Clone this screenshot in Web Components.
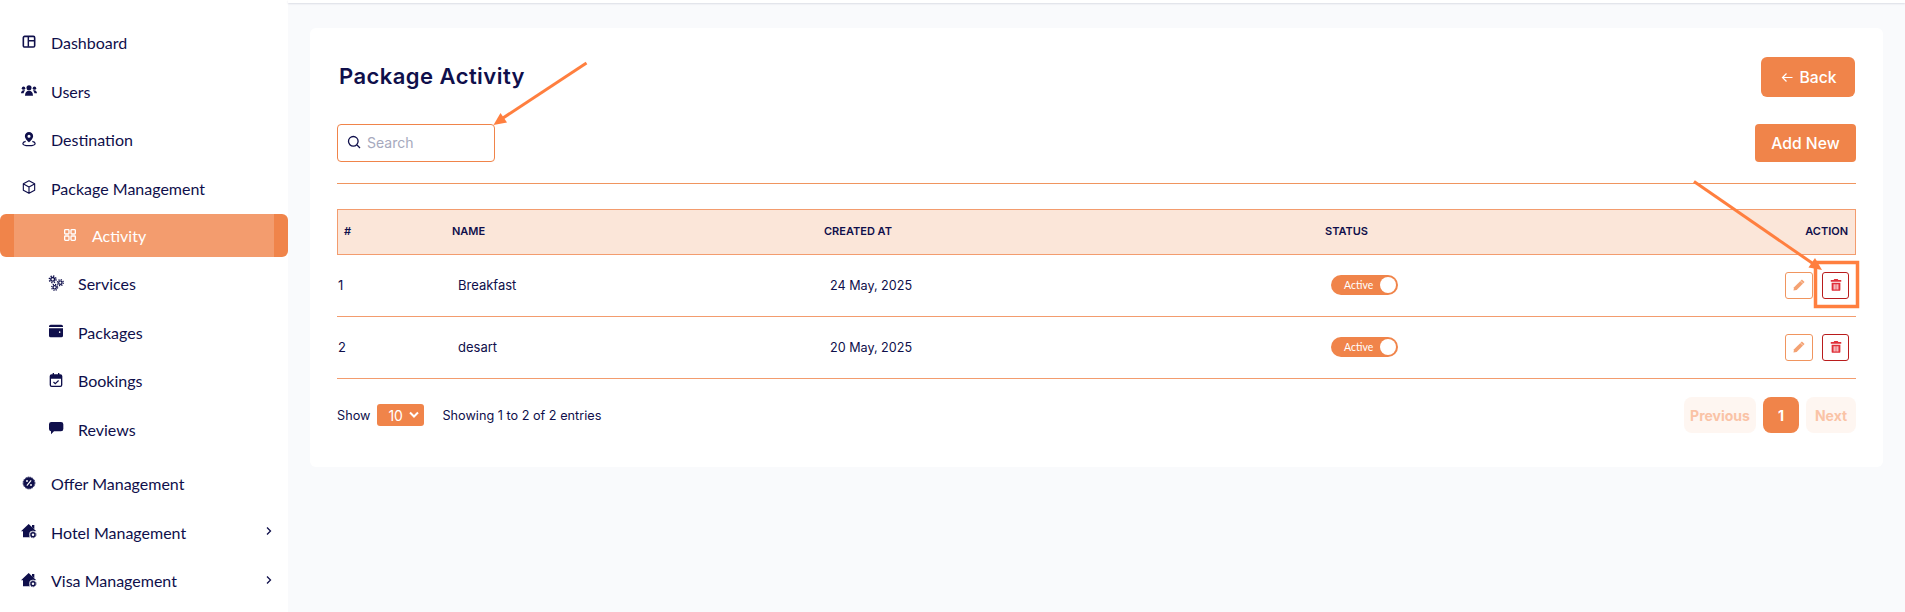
<!DOCTYPE html>
<html>
<head>
<meta charset="utf-8">
<title>Package Activity</title>
<style>
  html, body { margin: 0; height: 612px; overflow: hidden; }
  body { display: flex; font-family: "Inter", "Liberation Sans", sans-serif; color: #0f0f4b; background: #f9fafc; }
</style>
</head>
<body>
<app-sidebar>
  <nav-item icon="dashboard">Dashboard</nav-item>
  <nav-item icon="users">Users</nav-item>
  <nav-item icon="pin">Destination</nav-item>
  <nav-item icon="cube">Package Management</nav-item>
  <nav-item icon="grid" level="active">Activity</nav-item>
  <nav-item icon="gears" level="sub" style="margin-top:2.5px">Services</nav-item>
  <nav-item icon="wallet" level="sub">Packages</nav-item>
  <nav-item icon="calendar" level="sub">Bookings</nav-item>
  <nav-item icon="chat" level="sub">Reviews</nav-item>
  <nav-item icon="offer" style="margin-top:6px">Offer Management</nav-item>
  <nav-item icon="house" arrow>Hotel Management</nav-item>
  <nav-item icon="house" arrow>Visa Management</nav-item>
</app-sidebar>
<activity-page></activity-page>
<note-layer></note-layer>

<script>
const icons = {
  dashboard: '<rect x="3.5" y="3.5" width="17" height="16" rx="2" fill="none" stroke="currentColor" stroke-width="2.4"/><path d="M11 4v15M11 10h9" stroke="currentColor" stroke-width="2.2" fill="none"/>',
  users: '<circle cx="12" cy="8.500" r="3.800"/><circle cx="3.800" cy="9.200" r="2.600"/><circle cx="20.200" cy="9.200" r="2.600"/><path d="M6 20.500c0-4.500 2.400-7.200 6-7.200s6 2.700 6 7.200z"/><path d="M0 17c0-2.800 1.600-4.800 3.900-4.800.9 0 1.600.2 2.200.7-1.300 1.200-2 2.600-2.200 4.100zM24 17c0-2.800-1.600-4.800-3.900-4.800-.9 0-1.600.2-2.200.7 1.300 1.200 2 2.600 2.200 4.100z"/>',
  pin: '<path fill-rule="evenodd" d="M12 1.500a6.200 6.200 0 0 0-6.200 6.200c0 4 6.200 9.300 6.200 9.300s6.200-5.300 6.200-9.300A6.200 6.200 0 0 0 12 1.500zm0 4a2.300 2.300 0 1 1 0 4.600 2.300 2.300 0 0 1 0-4.600z"/><path d="M7 15.500c-2.600.7-4.200 1.800-4.200 3.200 0 2 4.100 3.300 9.200 3.300s9.200-1.300 9.200-3.300c0-1.400-1.600-2.500-4.200-3.200" fill="none" stroke="currentColor" stroke-width="1.800"/>',
  cube: '<path d="M12 2.500l8.500 4.700v9.600L12 21.500l-8.500-4.700V7.200zM3.800 7.400L12 12l8.200-4.600M12 12v9.300" fill="none" stroke="currentColor" stroke-width="1.700" stroke-linejoin="round"/>',
  grid: '<g fill="none" stroke="currentColor" stroke-width="2"><rect x="4" y="4" width="6.500" height="6.500" rx="1.200"/><rect x="13.500" y="4" width="6.500" height="6.500" rx="1.200"/><rect x="4" y="13.500" width="6.500" height="6.500" rx="1.200"/><rect x="13.500" y="13.500" width="6.500" height="6.500" rx="1.200"/></g>',
  gears: '<g fill="none" stroke="currentColor"><circle cx="7" cy="6.500" r="2.800" stroke-width="2"/><circle cx="7" cy="6.500" r="5" stroke-width="2.200" stroke-dasharray="2 1.930"/><circle cx="18.500" cy="11.500" r="2.500" stroke-width="1.800"/><circle cx="18.500" cy="11.500" r="4.400" stroke-width="2" stroke-dasharray="1.800 1.660"/><circle cx="10" cy="18.500" r="2.500" stroke-width="1.800"/><circle cx="10" cy="18.500" r="4.400" stroke-width="2" stroke-dasharray="1.800 1.660"/></g>',
  wallet: '<path d="M4 2.500h16a2.500 2.500 0 0 1 2.500 2.500v1H1.500V5A2.500 2.500 0 0 1 4 2.500z"/><path fill-rule="evenodd" d="M1.500 8h21v11a2.500 2.500 0 0 1-2.500 2.500H4A2.500 2.500 0 0 1 1.500 19zm16 4.500a1.200 1.200 0 1 0 0 2.400 1.200 1.200 0 0 0 0-2.400z"/>',
  calendar: '<rect x="3.500" y="4.500" width="17" height="17" rx="2" fill="none" stroke="currentColor" stroke-width="2"/><path d="M3.500 6.500a2 2 0 0 1 2-2h13a2 2 0 0 1 2 2V10h-17z"/><path d="M8 1.500v4M16 1.500v4" stroke="currentColor" stroke-width="2"/><path d="M8.200 15l2.700 2.600 5-4.800" fill="none" stroke="currentColor" stroke-width="1.800"/>',
  chat: '<path d="M5 3h14.500A3.500 3.500 0 0 1 23 6.500v7a3.500 3.500 0 0 1-3.500 3.500H9l-4.500 4.500V17A3.500 3.500 0 0 1 1.500 13.500v-7A3.500 3.500 0 0 1 5 3z"/>',
  offer: '<circle cx="12" cy="12" r="8.500"/><circle cx="12" cy="12" r="8.800" fill="none" stroke="currentColor" stroke-width="1.400" stroke-dasharray="2.500 .95"/><path d="M15.200 8.200l-6.400 7.600" stroke="#fff" stroke-width="1.700"/><circle cx="9" cy="9" r="1.400" fill="#fff"/><circle cx="15" cy="15" r="1.400" fill="#fff"/>',
  house: '<path d="M11.500 1.500L0 12.500h3v9h12v-9h8z"/><path d="M16.500 3h3.500v6.500l-3.500-3z"/><circle cx="18" cy="17.500" r="5.800" fill="#fff"/><circle cx="18" cy="17.500" r="3" fill="none" stroke="currentColor" stroke-width="2.200"/><circle cx="18" cy="17.500" r="4.600" fill="none" stroke="currentColor" stroke-width="1.200" stroke-dasharray="1.600 1.290"/>',
  pencil: '<path d="M17 2.500l4.500 4.500L8 20.500l-5.500 1 1-5.500z"/><path d="M14.500 5l4.500 4.500" stroke="#fff" stroke-width="1"/>',
  trash: '<path fill-rule="evenodd" d="M9 1.500h6l1 2h5v3H3v-3h5zM4.500 8h15v12a2 2 0 0 1-2 2h-11a2 2 0 0 1-2-2zM8 10.500V19.500h1.700v-9zm3.150 0V19.500h1.700v-9zm3.150 0V19.500H16v-9z"/>'
};

function svgIcon(name, size) {
  return `<svg width="${size}" height="${size}" viewBox="0 0 24 24" fill="currentColor">${icons[name]}</svg>`;
}

class AppSidebar extends HTMLElement {
  constructor() {
    super();
    this.attachShadow({ mode: 'open' });
    this.shadowRoot.innerHTML = `
      <style>
        :host { display: flex; flex-direction: column; flex: 0 0 288px; box-sizing: border-box; height: 612px; padding-top: 18.5px; background: #fff; overflow: hidden; }
      </style>
      <slot></slot>`;
  }
}

class NavItem extends HTMLElement {
  constructor() {
    super();
    this.attachShadow({ mode: 'open' });
  }

  connectedCallback() {
    const arrow = this.hasAttribute('arrow')
      ? '<svg class="arrow" width="8" height="10" viewBox="0 0 8 10"><path d="M2 1.500L5.500 5 2 8.500" fill="none" stroke="currentColor" stroke-width="1.300"/></svg>'
      : '';
    this.shadowRoot.innerHTML = `
      <style>
        :host { display: flex; align-items: center; flex: 0 0 48.5px; height: 48.5px; box-sizing: border-box; padding-left: 21px; font: 400 16px "Lato", "Liberation Sans", sans-serif; color: #0f0f4b; }
        :host([level="sub"]) { padding-left: 48px; }
        :host([level="active"]) { flex: 0 0 43px; height: 43px; margin-top: 1.5px; padding-left: 62px; color: #fff; background: linear-gradient(90deg, #f0844a 14px, #f39c6e 14px, #f39c6e 274px, #f0844a 274px); border-radius: 6px; }
        .ic { display: flex; width: 16px; height: 16px; margin-right: 14px; position: relative; top: -1px; }
        .arrow { margin-left: auto; margin-right: 15px; position: relative; top: -1px; }
      </style>
      <span class="ic">${svgIcon(this.getAttribute('icon'), 16)}</span><slot></slot>${arrow}`;
  }
}

class OrangeButton extends HTMLElement {
  constructor() {
    super();
    this.attachShadow({ mode: 'open' });
    this.shadowRoot.innerHTML = `
      <style>
        :host { display: inline-flex; align-items: center; justify-content: center; box-sizing: border-box; background: #f0844a; color: #fff; border-radius: 4px; font: 500 15.700px "Inter", "Liberation Sans", sans-serif; }
      </style>
      <slot></slot>`;
  }
}

class SearchBox extends HTMLElement {
  constructor() {
    super();
    this.attachShadow({ mode: 'open' });
    this.shadowRoot.innerHTML = `
      <style>
        :host { display: flex; align-items: center; box-sizing: border-box; width: 158px; height: 38px; padding: 0 0 2px 9px; border: 1px solid #f0844a; border-radius: 4px; background: #fff; }
        svg { margin-right: 6px; }
        input { all: unset; width: 100px; font: 400 14px "Inter", "Liberation Sans", sans-serif; color: #0f0f4b; }
        input::placeholder { color: #a6a9bd; opacity: 1; }
      </style>
      <svg width="14" height="14" viewBox="0 0 14 14" fill="none" stroke="#0f0f4b" stroke-width="1.300"><circle cx="6.300" cy="6.300" r="4.800"/><path d="M10 10l3 3"/></svg>
      <input placeholder="Search">`;
  }
}

class StatusToggle extends HTMLElement {
  constructor() {
    super();
    this.attachShadow({ mode: 'open' });
    this.shadowRoot.innerHTML = `
      <style>
        :host { display: inline-flex; align-items: center; justify-content: space-between; box-sizing: border-box; width: 67px; height: 20px; padding: 0 2px 0 13px; background: #f0844a; border-radius: 10px; color: #fff; font: 400 10.500px "Lato", "Liberation Sans", sans-serif; }
        i { width: 16px; height: 16px; border-radius: 50%; background: #fff; }
      </style>
      <slot></slot><i></i>`;
  }
}

class IconButton extends HTMLElement {
  constructor() {
    super();
    this.attachShadow({ mode: 'open' });
  }

  connectedCallback() {
    const name = this.getAttribute('icon');
    this.shadowRoot.innerHTML = `
      <style>
        :host { display: inline-flex; align-items: center; justify-content: center; box-sizing: border-box; height: 27px; border-radius: 3px; background: #fff; }
        :host([icon="pencil"]) { width: 28px; border: 1px solid #f0955f; color: #f4a273; }
        :host([icon="trash"]) { width: 27px; border: 1px solid #b91c1c; color: #e0303a; }
      </style>
      ${svgIcon(name, 14)}`;
  }
}

class TableRow extends HTMLElement {
  constructor() {
    super();
    this.attachShadow({ mode: 'open' });
  }

  connectedCallback() {
    this.shadowRoot.innerHTML = `
      <style>
        :host { display: grid; grid-template-columns: 120px 372px 501px 240px 1fr; align-items: center; height: 62px; box-sizing: border-box; padding: 0 0 1px 1px; border-bottom: 1px solid #f39c6e; font-size: 13px; color: #0f0f4b; }
        .date { font-size: 12.600px; }
        .status { display: flex; }
        .action { display: flex; justify-content: flex-end; gap: 9px; padding-right: 7px; }
      </style>
      <div>${this.getAttribute('num')}</div>
      <div>${this.getAttribute('name')}</div>
      <div class="date">${this.getAttribute('date')}</div>
      <div class="status"><status-toggle>Active</status-toggle></div>
      <div class="action"><icon-button icon="pencil"></icon-button><icon-button icon="trash"></icon-button></div>`;
  }
}

class ActivityPage extends HTMLElement {
  constructor() {
    super();
    this.attachShadow({ mode: 'open' });
    this.shadowRoot.innerHTML = `
      <style>
        :host { display: block; flex: 1; min-width: 0; height: 612px; background: #f9fafc; }
        .top { height: 3px; background: #fff; box-shadow: 0 1px 2px rgba(40,50,90,.14); }
        .card { margin: 25px 22px 0; height: 439px; box-sizing: border-box; padding: 29px 27px 0; background: #fff; border-radius: 6px; }
        .row { display: flex; align-items: center; justify-content: space-between; }
        h1 { margin: 0; padding: 0 0 2px 2px; font: 600 22px "Inter", "Liberation Sans", sans-serif; letter-spacing: .45px; color: #0f0f4b; }
        .back { width: 94px; height: 40px; margin-right: 1px; padding-left: 2px; border-radius: 6px; gap: 5px; }
        .add { width: 101px; height: 38px; }
        .second { margin-top: 27px; }
        hr { margin: 21px 0 0; border: 0; border-top: 1px solid #f0955f; }
        .head { display: grid; grid-template-columns: 108px 372px 501px 240px 1fr; align-items: center; height: 46px; box-sizing: border-box; margin-top: 25px; padding: 0 0 2px 6px; background: #fbe6d9; border: 1px solid #f39c6e; font-size: 11px; font-weight: 600; color: #0f0f4b; }
        .head div:last-child { text-align: right; padding-right: 7px; }
        .foot { display: flex; align-items: center; margin-top: 18px; height: 36px; font-size: 12.700px; color: #0f0f4b; }
        .size { display: inline-flex; align-items: center; justify-content: space-between; box-sizing: border-box; width: 47px; height: 22px; margin: 0 18px 0 7px; padding: 0 5px 0 11px; background: #f0844a; color: #fff; border-radius: 3px; font-size: 14px; }
        .pages { margin-left: auto; display: flex; gap: 7px; font-weight: 700; font-size: 14px; }
        .pages span { display: flex; align-items: center; justify-content: center; height: 36px; border-radius: 8px; background: #fef6f1; color: #fac3a6; }
        .pages .prev { width: 72px; }
        .pages .cur { width: 36px; background: #f0844a; color: #fff; }
        .pages .next { width: 50px; }
      </style>
      <div class="top"></div>
      <div class="card">
        <div class="row">
          <h1>Package Activity</h1>
          <orange-button class="back"><svg width="13" height="13" viewBox="0 0 13 13" fill="none" stroke="#fff" stroke-width="1.200"><path d="M11.500 6.500h-10M5.500 2.500l-4 4 4 4"/></svg>Back</orange-button>
        </div>
        <div class="row second">
          <search-box></search-box>
          <orange-button class="add">Add New</orange-button>
        </div>
        <hr>
        <div class="head"><div>#</div><div>NAME</div><div>CREATED AT</div><div>STATUS</div><div>ACTION</div></div>
        <table-row num="1" name="Breakfast" date="24 May, 2025"></table-row>
        <table-row num="2" name="desart" date="20 May, 2025"></table-row>
        <div class="foot">
          Show
          <span class="size">10<svg width="10" height="8" viewBox="0 0 10 8" fill="none" stroke="#fff" stroke-width="2"><path d="M1 1.500l4 4 4-4"/></svg></span>
          Showing 1 to 2 of 2 entries
          <div class="pages"><span class="prev">Previous</span><span class="cur">1</span><span class="next">Next</span></div>
        </div>
      </div>`;
  }
}

// annotation arrows drawn on top of the screenshot
class NoteLayer extends HTMLElement {
  constructor() {
    super();
    this.attachShadow({ mode: 'open' });
    this.shadowRoot.innerHTML = `
      <style>
        :host { position: absolute; left: 0; top: 0; width: 1905px; height: 612px; pointer-events: none; }
      </style>
      <svg width="1905" height="612" fill="none" stroke="#ff7f3f">
        <path d="M586.500 63L500 120" stroke-width="3"/>
        <path d="M493.500 125l7-12 6.500 9.500z" fill="#ff7f3f" stroke="none"/>
        <path d="M1694 181.500L1815 265" stroke-width="3"/>
        <path d="M1822 270l-13.500-2.500 6.500-9.500z" fill="#ff7f3f" stroke="none"/>
        <rect x="1815.500" y="262.500" width="42" height="44" stroke-width="3.500"/>
      </svg>`;
  }
}

customElements.define('app-sidebar', AppSidebar);
customElements.define('nav-item', NavItem);
customElements.define('orange-button', OrangeButton);
customElements.define('search-box', SearchBox);
customElements.define('status-toggle', StatusToggle);
customElements.define('icon-button', IconButton);
customElements.define('table-row', TableRow);
customElements.define('activity-page', ActivityPage);
customElements.define('note-layer', NoteLayer);
</script>
</body>
</html>
